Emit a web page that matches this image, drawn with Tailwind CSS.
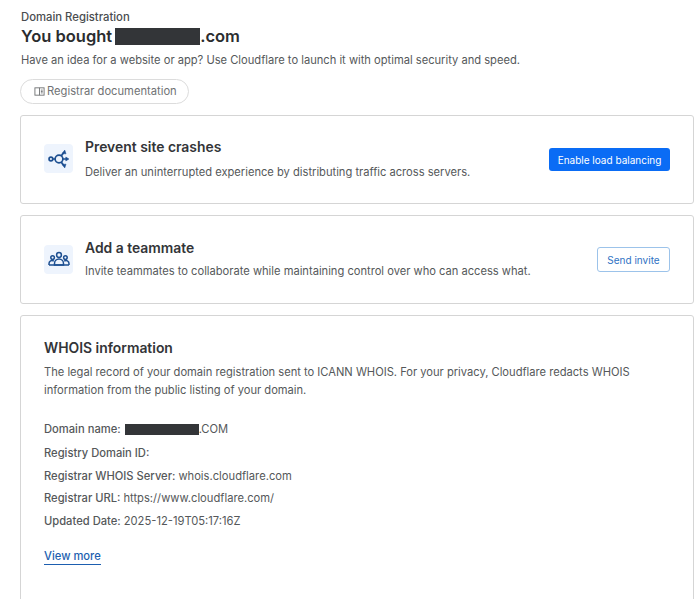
<!DOCTYPE html>
<html lang="en">
<head>
  <meta charset="UTF-8" />
  <title>Domain Registration</title>
  <script src="https://cdn.jsdelivr.net/npm/@tailwindcss/browser@4"></script>
</head>
<body class="bg-white font-['Inter',sans-serif] text-[#36393a] overflow-hidden h-[599px]">
  <div class="pl-[20px] pr-[5px] pt-[10px]">
    <div class="pl-[1px] text-[11.3px] leading-[14px] font-medium text-[#4a4d4f]">Domain Registration</div>
    <h1 class="flex items-center pl-[1px] text-[16.5px] leading-[24px] font-semibold text-[#2b2d2f]">
      <span>You bought</span>
      <span class="w-[85px] h-[17px] bg-[#333538] ml-[3px]"></span>
      <span>.com</span>
    </h1>
    <p class="pl-[1px] text-[11.15px] leading-[18px] mt-[3px] text-[#55585a]">Have an idea for a website or app? Use Cloudflare to launch it with optimal security and speed.</p>
    <a class="mt-[10px] flex items-center w-[169px] h-[25px] rounded-full border border-[#dcdcdc] pl-[13px] text-[11.2px] text-[#707274]">
      <svg class="w-[11px] h-[11px] mr-[2px]" viewBox="0 0 12 12" fill="none" stroke="#707274" stroke-width="1"><rect x="1" y="2" width="10" height="8"/><path d="M6 2v8M7.5 4.5h2M7.5 6h2M7.5 7.5h2"/></svg>
      Registrar documentation
    </a>

    <div class="mt-[11px] flex flex-col gap-[11px]">
      <section class="h-[89px] border border-[#d5d5d5] rounded-[3px] flex items-center pl-[23px] pr-[23px]">
        <div class="w-[29px] h-[29px] rounded-[4px] bg-[#eef4fd] flex items-center justify-center mr-[12px] mt-[-2px]">
          <svg class="w-[22px] h-[22px]" viewBox="0 0 21 21" fill="none" stroke="#1d4f91" stroke-width="1.6">
            <circle cx="2.8" cy="10.5" r="1.8"/>
            <circle cx="10.5" cy="10.5" r="3.7"/>
            <path d="M4.6 10.5h2.2M12.6 7.5l2.4-3M12.6 13.5l2.4 3M14.2 10.5h4"/>
            <path d="M13.4 5.2l2.6-3.2 1.2 3.6zM13.4 15.8l2.6 3.2 1.2-3.6zM17 8.6l3 1.9-3 1.9z" fill="#1d4f91" stroke-width="0.5"/>
          </svg>
        </div>
        <div class="flex-1 mt-[-1px]">
          <h2 class="text-[13.9px] leading-[20px] font-semibold text-[#333538]">Prevent site crashes</h2>
          <p class="text-[11.15px] leading-[18px] mt-[6px] text-[#55585a]">Deliver an uninterrupted experience by distributing traffic across servers.</p>
        </div>
        <button class="w-[121px] h-[23px] pt-[1px] rounded-[3px] bg-[#0a6cf5] text-white text-[10px]">Enable load balancing</button>
      </section>

      <section class="h-[89px] border border-[#d5d5d5] rounded-[3px] flex items-center pl-[23px] pr-[23px]">
        <div class="w-[29px] h-[29px] rounded-[4px] bg-[#eef4fd] flex items-center justify-center mr-[12px] mt-[-1px]">
          <svg class="w-[22px] h-[22px]" viewBox="0 0 22 22" fill="none" stroke="#1d4f91" stroke-width="1.5">
            <circle cx="11" cy="7" r="2.4"/>
            <circle cx="4.6" cy="9.6" r="1.8"/>
            <circle cx="17.4" cy="9.6" r="1.8"/>
            <path d="M6.5 17v-1.5a4.5 4.5 0 0 1 9 0V17z"/>
            <path d="M1 17v-1.3a3 3 0 0 1 4.8-2.6M21 17v-1.3a3 3 0 0 0-4.8-2.6M1 17h20"/>
          </svg>
        </div>
        <div class="flex-1 -mt-[2px]">
          <h2 class="text-[13.9px] leading-[20px] font-semibold text-[#333538]">Add a teammate</h2>
          <p class="text-[11.15px] leading-[18px] mt-[4px] text-[#55585a]">Invite teammates to collaborate while maintaining control over who can access what.</p>
        </div>
        <button class="w-[73px] h-[25px] pt-[1px] rounded-[3px] border border-[#9cc3ea] bg-white text-[#2f72c4] text-[10px]">Send invite</button>
      </section>

      <section class="h-[300px] border border-[#d5d5d5] rounded-[3px] pl-[23px] pr-[20px] pt-[22px]">
        <h2 class="text-[13.9px] leading-[20px] font-semibold text-[#333538]">WHOIS information</h2>
        <p class="text-[11.15px] leading-[18px] mt-[5px] text-[#55585a]">The legal record of your domain registration sent to ICANN WHOIS. For your privacy, Cloudflare redacts WHOIS information from the public listing of your domain.</p>
        <dl class="mt-[21px] text-[11.2px] leading-[18px] text-[#55585a] flex flex-col gap-[5px]">
          <div class="flex items-center gap-[3px]"><dt class="font-medium">Domain name:</dt><dd class="flex items-center"><span class="w-[74px] h-[11px] bg-[#333538] ml-[1px]"></span>.COM</dd></div>
          <div class="flex gap-[3px] mt-[1px]"><dt class="font-medium">Registry Domain ID:</dt></div>
          <div class="flex gap-[3px]"><dt class="font-medium">Registrar WHOIS Server:</dt><dd>whois.cloudflare.com</dd></div>
          <div class="flex gap-[3px] -mt-[1px]"><dt class="font-medium">Registrar URL:</dt><dd>https://www.cloudflare.com/</dd></div>
          <div class="flex gap-[3px]"><dt class="font-medium">Updated Date:</dt><dd>2025-12-19T05:17:16Z</dd></div>
        </dl>
        <a class="inline-block mt-[19px] text-[11.2px] leading-[15px] font-medium text-[#1d5fb0] border-b border-[#1d5fb0]">View more</a>
      </section>
    </div>
  </div>
</body>
</html>
